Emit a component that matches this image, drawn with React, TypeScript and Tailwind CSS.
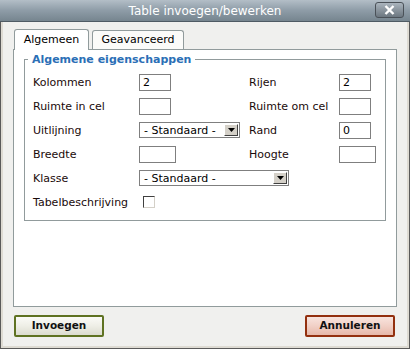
function TextBox({ value = "", width = "w-[32px]" }: { value?: string; width?: string }) {
  return (
    <div className={`${width} flex h-[17px] items-center border border-[#7f7f7f] bg-white px-[3px] text-[11px] leading-none text-black`}>
      {value}
    </div>
  );
}

function Select({ value, width }: { value: string; width: string }) {
  return (
    <div className={`${width} flex h-[16px] items-center justify-between border border-[#7f7f7f] bg-white pl-[4px] pr-px text-[11px] leading-none text-black`}>
      <span>{value}</span>
      <span className="flex h-[12px] w-[14px] items-center justify-center border border-t-white border-l-white border-r-[#404040] border-b-[#404040] bg-[#d4d0c8]">
        <svg width="7" height="4" viewBox="0 0 7 4">
          <path d="M0 0h7L3.5 4z" fill="#000" />
        </svg>
      </span>
    </div>
  );
}

function Label({ children }: { children: React.ReactNode }) {
  return <span className="text-[11px] leading-none text-[#1a0a0a]">{children}</span>;
}

export default function App() {
  return (
    <div
      className="flex h-[349px] w-[410px] flex-col overflow-hidden bg-[#f0f0ee]"
      style={{ fontFamily: '"DejaVu Sans", Verdana, sans-serif' }}
    >
      {/* title bar */}
      <div className="relative flex h-[22px] shrink-0 items-center justify-center border-b border-[#4f5b64] bg-gradient-to-b from-[#b3bec7] via-[#8e9ca7] to-[#76858f]">
        <span className="text-[12px] text-white">Table invoegen/bewerken</span>
        <div className="absolute right-[6px] top-[2px] flex h-[16px] w-[29px] items-center justify-center rounded-[3px] border border-[#4a5158] bg-gradient-to-b from-[#aab4bd] to-[#6c7780]">
          <svg width="11" height="10" viewBox="0 0 11 10">
            <path d="M1.5 1l8 8M9.5 1l-8 8" stroke="#fff" strokeWidth="2.4" />
          </svg>
        </div>
      </div>

      <div className="flex flex-1 flex-col border-x border-b border-[#5a5a5a]">
        <div className="flex flex-1 flex-col border-x-2 border-b-2 border-[#dedbd3] px-[10px]">
          {/* tabs */}
          <div className="mt-[7px] flex items-end gap-[3px] pl-[1px]">
            <div className="relative z-10 -mb-px flex h-[21px] w-[75px] items-center justify-center rounded-t-[3px] border border-b-0 border-[#919b9c] bg-white text-[11px] text-black">
              Algemeen
            </div>
            <div className="flex h-[19px] w-[92px] items-center justify-center rounded-t-[3px] border border-b-0 border-[#919b9c] bg-[#fbfbf9] text-[11px] text-black">
              Geavanceerd
            </div>
          </div>

          {/* panel */}
          <div className="h-[258px] border border-[#919b9c] bg-white px-[10px] pt-[9px]">
            <div className="relative border border-[#919b9c] pb-[6px] pl-[8px] pt-[10px]">
              <span className="absolute left-[3px] top-[-8px] bg-white px-[4px] text-[11px] font-bold text-[#2b6fb6]">
                Algemene eigenschappen
              </span>
              <div className="grid grid-cols-[106px_110px_90px_auto] auto-rows-[24px] items-center">
                <Label>Kolommen</Label>
                <TextBox value="2" />
                <Label>Rijen</Label>
                <TextBox value="2" />

                <Label>Ruimte in cel</Label>
                <TextBox />
                <Label>Ruimte om cel</Label>
                <TextBox />

                <Label>Uitlijning</Label>
                <Select value="- Standaard -" width="w-[101px]" />
                <Label>Rand</Label>
                <TextBox value="0" />

                <Label>Breedte</Label>
                <TextBox width="w-[37px]" />
                <Label>Hoogte</Label>
                <TextBox width="w-[37px]" />

                <Label>Klasse</Label>
                <div className="col-span-3">
                  <Select value="- Standaard -" width="w-[150px]" />
                </div>

                <Label>Tabelbeschrijving</Label>
                <div className="col-span-3 pl-[4px]">
                  <div className="h-[12px] w-[12px] border border-t-[#404040] border-l-[#404040] border-r-[#d4d0c8] border-b-[#d4d0c8] bg-white" />
                </div>
              </div>
            </div>
          </div>

          {/* buttons */}
          <div className="mt-[8px] flex justify-between pl-[1px] pr-[2px]">
            <button className="flex h-[22px] w-[90px] items-center justify-center rounded-[2px] border-2 border-[#5f7222] bg-gradient-to-b from-[#fbfbf7] via-[#eeeee6] to-[#dcdcd0] text-[10.5px] font-bold text-[#111]">
              Invoegen
            </button>
            <button className="flex h-[22px] w-[90px] items-center justify-center rounded-[2px] border-2 border-[#93300f] bg-gradient-to-b from-[#f8e4de] via-[#f1d0c6] to-[#e6b8aa] text-[10.5px] font-bold text-[#111]">
              Annuleren
            </button>
          </div>
        </div>
      </div>
    </div>
  );
}
